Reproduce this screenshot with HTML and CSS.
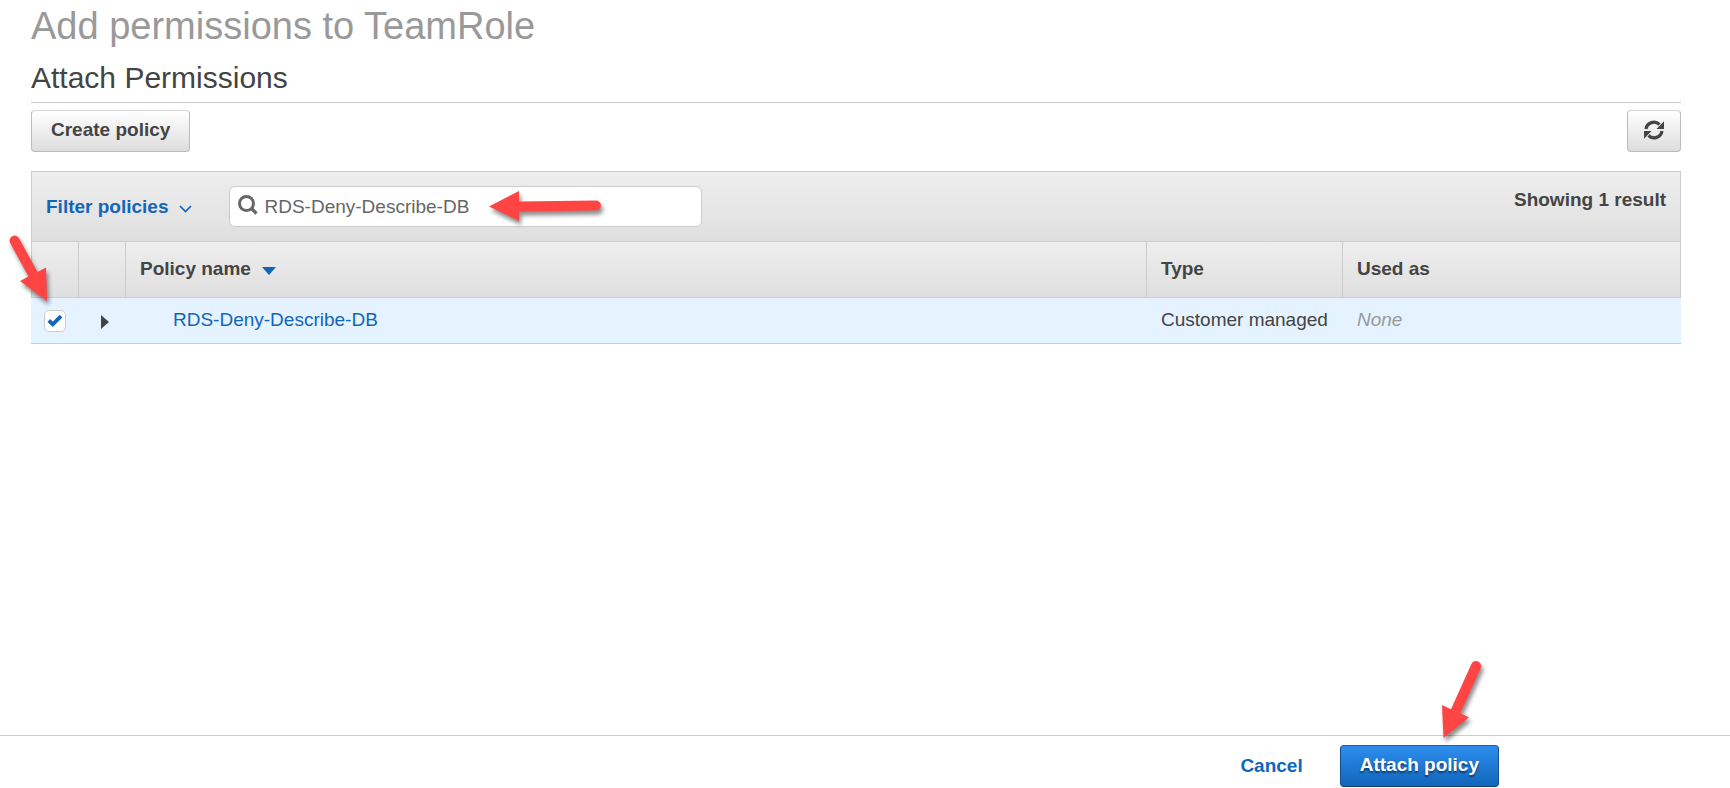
FILE: index.html
```html
<!DOCTYPE html>
<html lang="en">
<head>
<meta charset="utf-8">
<meta name="viewport" content="width=device-width, initial-scale=1">
<title>Add permissions to TeamRole</title>
<link rel="stylesheet" href="styles.css">
</head>
<body>
<main class="content">
  <h1 class="page-title">Add permissions to TeamRole</h1>
  <h2 class="section-title">Attach Permissions</h2>
  <div class="actions">
    <button class="btn" type="button">Create policy</button>
    <button class="btn btn-icon" type="button" aria-label="Refresh">
      <svg width="20" height="20" viewBox="0 0 20 20" aria-hidden="true">
        <path d="M2 9A8 8 0 0 1 15.500 4.500" fill="none" stroke="#444" stroke-width="3.200"/>
        <path d="M20 1.200V9h-7.500z" fill="#444"/>
        <path d="M18 11A8 8 0 0 1 4.500 15.500" fill="none" stroke="#444" stroke-width="3.200"/>
        <path d="M0 18.800V11h7.500z" fill="#444"/>
      </svg>
    </button>
  </div>

  <section class="panel">
    <div class="toolbar">
      <button class="filter" type="button">Filter policies
        <svg width="13" height="8" viewBox="0 0 13 8" aria-hidden="true"><path d="M1 1l5.500 5.500L12 1" fill="none" stroke="#1166bb" stroke-width="1.700"/></svg>
      </button>
      <div class="search">
        <svg class="search-icon" width="20" height="20" viewBox="0 0 20 20" aria-hidden="true"><circle cx="8.500" cy="8.500" r="7" fill="none" stroke="#666" stroke-width="3"/><path d="M13.500 13.500l5 5" stroke="#666" stroke-width="3.200"/></svg>
        <input class="search-input" type="text" aria-label="Search policies" value="RDS-Deny-Describe-DB">
        <svg class="pointer pointer-search" width="134" height="50" viewBox="0 0 134 50" aria-hidden="true"><path d="M18 25.500L48 10v10.500L125 19.500a5 5 0 0 1 0 10L48 30.500V40z" fill="#ff4444"/></svg>
      </div>
      <span class="count">Showing 1 result</span>
    </div>
    <table class="policies">
      <thead>
        <tr>
          <th class="col-check"></th>
          <th class="col-expand"></th>
          <th>Policy name <svg class="sort" width="14" height="8" viewBox="0 0 14 8" aria-hidden="true"><path d="M0 0h14L7 8z" fill="#1166bb"/></svg></th>
          <th class="col-type">Type</th>
          <th class="col-used">Used as</th>
        </tr>
      </thead>
      <tbody>
        <tr>
          <td class="cell-check"><input class="check" type="checkbox" aria-label="Select RDS-Deny-Describe-DB" checked><svg class="tick" width="16" height="13" viewBox="0 0 16 13" aria-hidden="true"><path d="M1.800 6.500l4 3.800L14 2.200" fill="none" stroke="#1166bb" stroke-width="3.800"/></svg></td>
          <td class="cell-expand"><button class="expand" type="button" aria-label="Expand"><svg width="8" height="14" viewBox="0 0 8 14" aria-hidden="true"><path d="M0 0l8 7-8 7z" fill="#444"/></svg></button></td>
          <td class="cell-name"><a href="#">RDS-Deny-Describe-DB</a></td>
          <td>Customer managed</td>
          <td class="none">None</td>
        </tr>
      </tbody>
    </table>
    <svg class="pointer pointer-check" width="60" height="90" viewBox="0 0 60 90" aria-hidden="true"><path d="M47 71L20 51l8.500-4.500L10.200 13a5 5 0 0 1 8.800-4.800L37.500 42l8.500-4.500z" fill="#ff4444"/></svg>
  </section>
</main>

<footer class="footer">
  <a class="cancel" href="#">Cancel</a>
  <div class="submit">
    <button class="btn btn-primary" type="button">Attach policy</button>
    <svg class="pointer pointer-submit" width="60" height="100" viewBox="0 0 60 100" aria-hidden="true"><path d="M13.500 88L12 55l9 4.200L41.400 14a5 5 0 0 1 9.200 4.200L30.300 63.200l8.700 4z" fill="#ff4444"/></svg>
  </div>
</footer>
</body>
</html>
```
FILE: styles.css
```css
* {
  box-sizing: border-box;
}

body {
  margin: 0;
  min-height: 100vh;
  display: flex;
  flex-direction: column;
  background: #fff;
  color: #444;
  font: 19px/24px "Liberation Sans", Arial, sans-serif;
}

button,
input {
  font: inherit;
}

a {
  color: #1166bb;
  text-decoration: none;
}

.content {
  flex: 1;
  padding: 4px 49px 0 31px;
}

.page-title {
  margin: 0;
  font-size: 38px;
  line-height: 44px;
  font-weight: 400;
  color: #999;
}

.section-title {
  margin: 12px 0 7px;
  padding-bottom: 6px;
  border-bottom: 1px solid #ccc;
  font-size: 30px;
  line-height: 36px;
  font-weight: 400;
}

.actions {
  display: flex;
  justify-content: space-between;
  margin-bottom: 19px;
}

.btn {
  height: 42px;
  padding: 0 19px 2px;
  border: 1px solid #bbb;
  border-top-color: #d5d5d5;
  border-radius: 4px;
  background: linear-gradient(#fff, #ddd);
  color: #444;
  font-weight: 700;
}

.btn-icon {
  display: flex;
  align-items: center;
  padding: 0 16px 2px;
}

.btn-primary {
  border-color: #1a62ac #10508f #0d437a;
  background: linear-gradient(#2e8ded, #1166bb);
  color: #fff;
  text-shadow: 0 2px 2px rgba(0, 0, 0, 0.5);
}

.panel {
  position: relative;
}

.toolbar {
  display: flex;
  align-items: center;
  height: 70px;
  padding: 0 14px;
  border: 1px solid #ccc;
  border-bottom: 0;
  background: linear-gradient(#eee, #dfdfdf);
}

.filter {
  display: flex;
  align-items: center;
  gap: 11px;
  padding: 0;
  border: 0;
  background: none;
  color: #1166bb;
  font-weight: 700;
}

.filter svg {
  margin-top: 4px;
}

.search {
  position: relative;
  width: 473px;
  margin-left: 37px;
}

.search-input {
  display: block;
  width: 100%;
  height: 41px;
  padding: 0 8px 0 34px;
  border: 1px solid #ccc;
  border-radius: 6px;
  background: #fff;
  color: #666;
}

.search-icon {
  position: absolute;
  left: 9px;
  top: 9px;
}

.count {
  align-self: flex-start;
  margin: 16px 0 0 auto;
  font-weight: 700;
}

.policies {
  width: 100%;
  table-layout: fixed;
  border-collapse: separate;
  border-spacing: 0;
}

.policies th {
  height: 57px;
  padding: 0 14px 2px;
  border: solid #ccc;
  border-width: 1px 1px 1px 0;
  background: linear-gradient(#eee, #dfdfdf);
  text-align: left;
}

.policies th:first-child {
  border-left-width: 1px;
}

.policies td {
  height: 46px;
  padding: 0 14px 2px;
  border-bottom: 1px solid #ccc;
  background: #e5f2ff;
  white-space: nowrap;
}

.col-check {
  width: 48px;
}

.col-expand {
  width: 47px;
}

.col-type {
  width: 196px;
}

.col-used {
  width: 338px;
}

.sort {
  margin-left: 6px;
}

.policies .cell-check {
  position: relative;
  padding: 0 0 0 13px;
}

.check {
  appearance: none;
  display: block;
  width: 22px;
  height: 22px;
  margin: 0;
  border: 1px solid #ccc;
  border-radius: 5px;
  background: #fff;
}

.tick {
  position: absolute;
  left: 16px;
  top: 16px;
}

.policies .cell-expand {
  padding: 3px 0 0 22px;
}

.expand {
  display: block;
  padding: 0;
  border: 0;
  background: none;
}

.expand svg {
  display: block;
}

.policies .cell-name {
  padding-left: 47px;
}

.none {
  color: #999;
  font-style: italic;
}

.footer {
  display: flex;
  align-items: center;
  justify-content: flex-end;
  gap: 37px;
  padding: 9px 231px 1px 31px;
  border-top: 1px solid #ccc;
}

.cancel {
  font-weight: 700;
}

.submit {
  position: relative;
}

.pointer {
  position: absolute;
  pointer-events: none;
  filter: drop-shadow(2px 4px 2px rgba(0, 0, 0, 0.45));
}

.pointer-search {
  left: 242px;
  top: -5px;
}

.pointer-check {
  left: -31px;
  top: 59px;
}

.pointer-submit {
  left: 90px;
  top: -95px;
}
```
